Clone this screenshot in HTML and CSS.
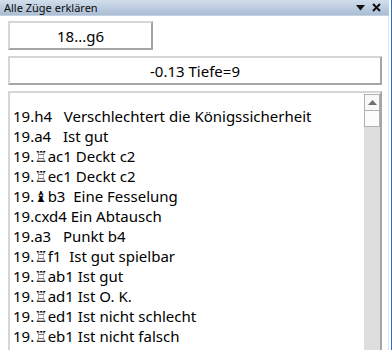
FILE: index.html
```html
<!DOCTYPE html>
<html lang="de">
<head>
  <meta charset="UTF-8" />
  <title>Alle Züge erklären</title>
  <link rel="stylesheet" href="styles.css">
</head>
<body>
  <div class="window">
    <div class="pane">
      <div class="titlebar">
        <span class="title">Alle Züge erklären</span>
        <span class="tools">
          <svg width="9" height="6" viewBox="0 0 9 6"><path d="M0 0h9L4.5 5.5z" fill="#111"/></svg>
          <svg width="9" height="9" viewBox="0 0 9 9"><path d="M1 1l7 7M8 1L1 8" stroke="#111" stroke-width="2"/></svg>
        </span>
      </div>
      <div class="content">
        <div class="box short">18...g6</div>
        <div class="box">-0.13 Tiefe=9</div>
        <div class="listbox">
          <ul class="moves">
            <li>19.h4   Verschlechtert die Königssicherheit</li>
            <li>19.a4   Ist gut</li>
            <li>19.<span class="pc">♖</span>ac1 Deckt c2</li>
            <li>19.<span class="pc">♖</span>ec1 Deckt c2</li>
            <li>19.<span class="pc">♝</span>b3  Eine Fesselung</li>
            <li>19.cxd4 Ein Abtausch</li>
            <li>19.a3   Punkt b4</li>
            <li>19.<span class="pc">♖</span>f1  Ist gut spielbar</li>
            <li>19.<span class="pc">♖</span>ab1 Ist gut</li>
            <li>19.<span class="pc">♖</span>ad1 Ist O. K.</li>
            <li>19.<span class="pc">♖</span>ed1 Ist nicht schlecht</li>
            <li>19.<span class="pc">♖</span>eb1 Ist nicht falsch</li>
            <li>19.<span class="pc">♖</span>e2 Ist nicht falsch</li>
          </ul>
          <div class="scrollbar">
            <div class="sb-up">
              <svg width="9" height="5" viewBox="0 0 9 5"><path d="M0 5h9L4.5 0z" fill="#6e6e6e"/></svg>
            </div>
            <div class="sb-thumb"></div>
          </div>
        </div>
      </div>
    </div>
  </div>
</body>
</html>
```

FILE: styles.css
```css
body {
  margin: 0;
  font-family: "Noto Sans", "Open Sans", sans-serif;
  color: #000;
  background: #fff;
}
.window {
  width: 392px;
  height: 350px;
  overflow: hidden;
  display: flex;
  border-right: 1px solid #2f6cc6;
  box-sizing: border-box;
}
.pane {
  flex: 1;
  display: flex;
  flex-direction: column;
  border-right: 2px solid #fff;
  box-shadow: inset -1px 0 0 #e4e4e4;
}
.titlebar {
  height: 21px;
  display: flex;
  align-items: center;
  justify-content: space-between;
  padding: 0 8px 0 4px;
  background: linear-gradient(#d2deeb, #aabdd4);
  border-bottom: 1px solid #c4d1e0;
}
.title {
  font-size: 11px;
  color: #0a0a0a;
}
.tools {
  display: flex;
  align-items: center;
  gap: 7px;
}
.content {
  padding: 5px 7px 0 8px;
  display: flex;
  flex-direction: column;
  gap: 6px;
}
.box {
  height: 29px;
  box-sizing: border-box;
  border: 2px solid;
  border-color: #d6d6d6 #a6a6a6 #a6a6a6 #d6d6d6;
  display: flex;
  align-items: center;
  justify-content: center;
  font-size: 15px;
}
.box.short {
  width: 145px;
}
.listbox {
  height: 270px;
  box-sizing: border-box;
  border: 2px solid;
  border-color: #d6d6d6 #a6a6a6 #a6a6a6 #d6d6d6;
  display: flex;
  padding: 1px 0 0 0;
}
.moves {
  flex: 1;
  list-style: none;
  margin: 0;
  padding: 12px 0 0 3px;
  font-size: 15px;
}
.moves li {
  height: 20px;
  line-height: 20px;
  white-space: pre;
}
.pc {
  font-family: "DejaVu Sans", sans-serif;
  font-size: 15px;
  line-height: 1;
}
.scrollbar {
  width: 16px;
  background: #dedede;
  display: flex;
  flex-direction: column;
}
.sb-up {
  height: 17px;
  box-sizing: border-box;
  border: 1px solid #b0b0b0;
  background: #f8f8f8;
  display: flex;
  align-items: center;
  justify-content: center;
}
.sb-thumb {
  height: 16px;
  box-sizing: border-box;
  border: 1px solid #b0b0b0;
  border-top: 0;
  background: #fcfcfc;
}
```
